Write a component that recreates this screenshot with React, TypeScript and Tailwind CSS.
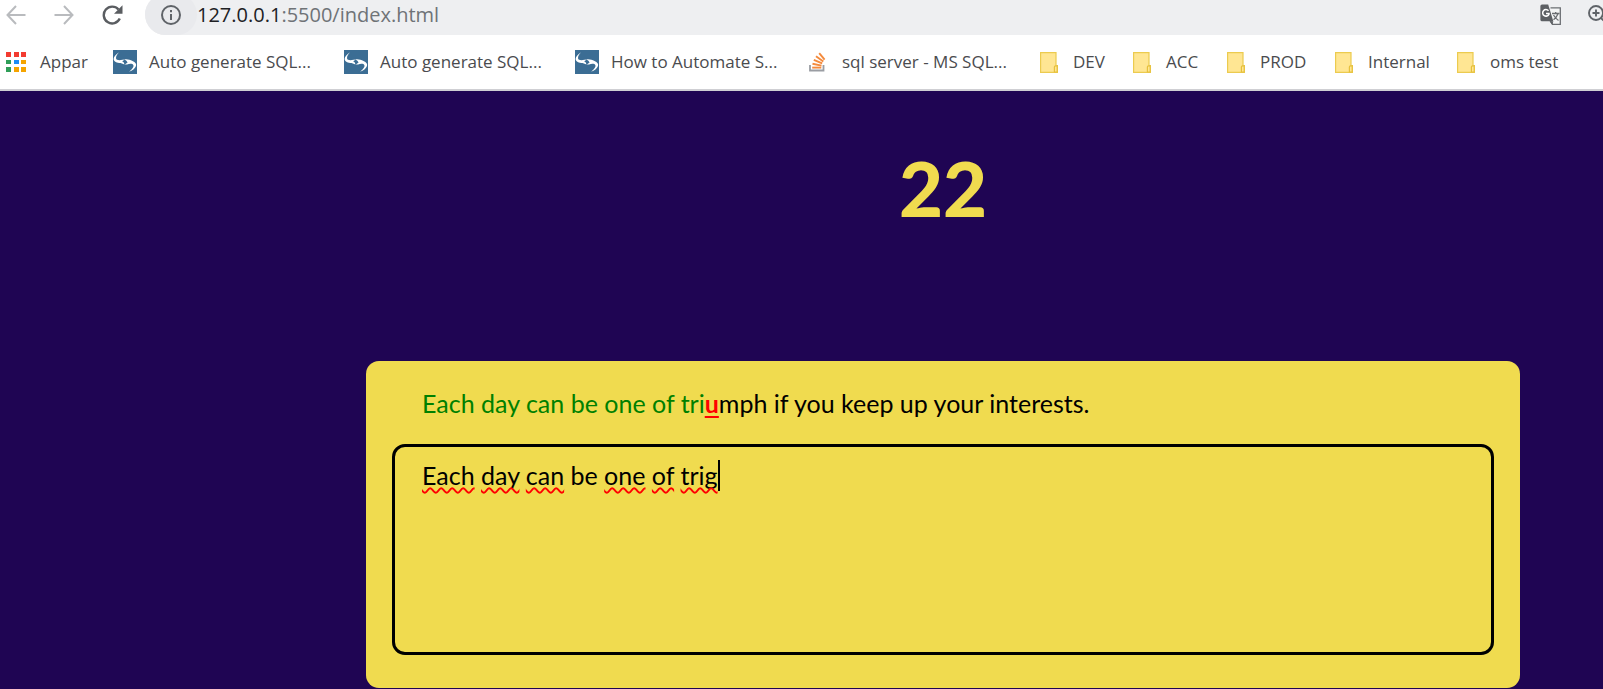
import { useState, type ReactNode } from "react";

function AppsIcon() {
  const colors = [
    "#f33b30", "#f33b30", "#f33b30",
    "#2f9e58", "#1b8cf5", "#f5a400",
    "#2f9e58", "#f5a400", "#f5a400",
  ];
  return (
    <svg viewBox="0 0 20 20" className="h-5 w-5" shapeRendering="crispEdges" aria-hidden="true">
      {colors.map((fill, i) => (
        <rect key={i} x={(i % 3) * 7.5} y={Math.floor(i / 3) * 7.5} width="5" height="4.6" fill={fill} />
      ))}
    </svg>
  );
}

function ShackIcon() {
  return (
    <svg viewBox="0 0 24 24" className="h-6 w-6" aria-hidden="true">
      <rect width="24" height="24" fill="#3b6d94" />
      <path d="M6.200 2.200 C3.200 4 .6 6.600 .6 9 C.8 11.700 4 13 7.500 13 L11.500 14.400 L10.800 12.600 L9.200 11.300 L12 9.600 L9.500 9.800 C6 10.600 3.400 10.200 3 8.200 C2.900 6 4.500 3.900 6.200 2.200 Z" fill="#fff" />
      <path d="M11.500 9.400 C14 8.800 17 9.600 19.500 11 C22.400 12.400 23.700 13.800 23 16 C22 18.600 19.500 20.700 16 21.800 C18.800 19.500 21 17 20.400 15.200 C19.600 13.600 17 13.300 14 14.600 L11.800 14.400 L14.600 12.400 L13.400 10.800 Z" fill="#fff" />
    </svg>
  );
}

function StackIcon() {
  return (
    <svg viewBox="0 0 18 20" className="h-5 w-[18px]" fill="none" aria-hidden="true">
      <path d="M1 13 V18.500 H14.500 V13" stroke="#9a9da3" strokeWidth="1.800" />
      <g stroke="#f48a3c" strokeWidth="1.900">
        <path d="M3.200 15.600 H12.300" />
        <path d="M3.500 11.800 L12.500 13.600" />
        <path d="M4.800 7.800 L13.200 11.400" />
        <path d="M7 4.200 L14.300 9.400" />
        <path d="M10.200 1.200 L15.600 7.600" />
      </g>
    </svg>
  );
}

function FolderIcon() {
  return (
    <svg viewBox="0 0 18 21" className="h-[21px] w-[18px]" aria-hidden="true">
      <path d="M.6 .6 H16 V13.500 H17.400 V20.400 H.6 Z" fill="#ffe693" stroke="#eccb4f" strokeWidth="1.200" />
      <path d="M14.400 20 V15 Q14.400 13.800 15.600 13.800 H17.200 V20 Z" fill="#ffe693" stroke="#e6c03c" strokeWidth="1.200" />
    </svg>
  );
}

function ArrowIcon({ flip = false }: { flip?: boolean }) {
  return (
    <svg viewBox="0 0 20 20" className={flip ? "h-5 w-5 -scale-x-100" : "h-5 w-5"} fill="none" stroke="#b9bbbe" strokeWidth="2" aria-hidden="true">
      <path d="M19.500 10 H2 M10 1 L1.500 10 L10 19" />
    </svg>
  );
}

function ReloadIcon() {
  return (
    <svg viewBox="0 0 22 20" className="h-5 w-[22px]" aria-hidden="true">
      <path d="M17.800 13.600 A8.400 8.400 0 1 1 16.500 4.500" fill="none" stroke="#5a5d61" strokeWidth="2.400" />
      <path d="M20.500 .3 V8.800 H12 Z" fill="#5a5d61" />
    </svg>
  );
}

function InfoIcon() {
  return (
    <svg viewBox="0 0 20 20" className="h-5 w-5" fill="none" stroke="#5f6368" strokeWidth="2" aria-hidden="true">
      <circle cx="10" cy="10" r="9" />
      <path d="M10 9 V15 M10 5 V7.200" />
    </svg>
  );
}

function TranslateIcon() {
  return (
    <svg viewBox="0 0 22 22" className="h-[22px] w-[22px]" aria-hidden="true">
      <path d="M10.500 3.800 H20.300 V20.300 H12.500 L10.500 17" fill="#f3f4f5" stroke="#6b6e72" strokeWidth="1.300" />
      <path d="M2 .5 H8.200 L13.300 17.300 H2 Q.4 17.300 .4 15.700 V2.100 Q.4 .5 2 .5 Z" fill="#5d6064" />
      <path d="M9.500 17.300 H13.300 L12.300 21 Z" fill="#5d6064" />
      <path d="M8.500 6.700 A3.300 3.300 0 1 0 9 10.100 V9.500 H6" fill="none" stroke="#fff" strokeWidth="1.500" />
      <path d="M12 9.500 H19.500 M15.700 8 V9.500 M18 9.700 Q16.500 13.500 13.500 15.800 M13.500 11 Q15.500 14.500 18.500 16.500" fill="none" stroke="#6b6e72" strokeWidth="1.300" />
    </svg>
  );
}

function ZoomIcon() {
  return (
    <svg viewBox="0 0 20 20" className="h-5 w-5" fill="none" stroke="#5f6368" strokeWidth="1.900" aria-hidden="true">
      <circle cx="8" cy="8" r="7" />
      <path d="M4.500 8 H11.500 M8 4.500 V11.500 M13 13 L19 19" />
    </svg>
  );
}

type Bookmark = { label: string; icon: ReactNode; width: string };

const bookmarks: Bookmark[] = [
  { label: "Appar", icon: <AppsIcon />, width: "w-[109px]" },
  { label: "Auto generate SQL...", icon: <ShackIcon />, width: "w-[231px]" },
  { label: "Auto generate SQL...", icon: <ShackIcon />, width: "w-[231px]" },
  { label: "How to Automate S...", icon: <ShackIcon />, width: "w-[231px]" },
  { label: "sql server - MS SQL...", icon: <StackIcon />, width: "w-[231px]" },
  { label: "DEV", icon: <FolderIcon />, width: "w-[93px]" },
  { label: "ACC", icon: <FolderIcon />, width: "w-[94px]" },
  { label: "PROD", icon: <FolderIcon />, width: "w-[108px]" },
  { label: "Internal", icon: <FolderIcon />, width: "w-[122px]" },
  { label: "oms test", icon: <FolderIcon />, width: "w-[110px]" },
];

function Toolbar() {
  return (
    <div className="flex h-[35px] items-end overflow-hidden">
      <div className="flex h-[41px] w-[145px] shrink-0 items-center gap-7 pl-[6px]">
        <button type="button" aria-label="Back"><ArrowIcon /></button>
        <button type="button" aria-label="Forward"><ArrowIcon flip /></button>
        <button type="button" aria-label="Reload"><ReloadIcon /></button>
      </div>
      <div className="flex h-[41px] min-w-0 flex-1 items-center rounded-l-full bg-[#eeeff1]">
        <button type="button" aria-label="Site information" className="flex h-[41px] w-[52px] shrink-0 items-center justify-center rounded-full bg-[#e9eaed]">
          <InfoIcon />
        </button>
        <div className="min-w-0 flex-1 text-xl leading-7 whitespace-nowrap text-[#6f7377]">
          <span className="text-[#202124]">127.0.0.1</span>:5500/index.html
        </div>
        <button type="button" aria-label="Translate this page" className="mr-[26px] shrink-0"><TranslateIcon /></button>
        <button type="button" aria-label="Zoom" className="-mr-[5px] shrink-0"><ZoomIcon /></button>
      </div>
    </div>
  );
}

function BookmarksBar() {
  return (
    <nav aria-label="Bookmarks" className="flex h-[56px] items-center overflow-hidden border-b-2 border-[#cfcfd3] pl-1 text-[17px] leading-6 text-[#4a4b4e]">
      {bookmarks.map(({ label, icon, width }, i) => (
        <a key={i} href="#" className={`flex shrink-0 items-center gap-3 whitespace-nowrap ${width}`}>
          <span className="flex w-6 justify-center">{icon}</span>
          {label}
        </a>
      ))}
    </nav>
  );
}

const quote = "Each day can be one of triumph if you keep up your interests.";

function QuoteDisplay({ typed }: { typed: string }) {
  return (
    <p id="quote" className="mb-[25px] ml-[30px]">
      {quote.split("").map((char, i) => {
        if (i >= typed.length) return <span key={i}>{char}</span>;
        return (
          <span key={i} className={typed[i] === char ? "text-[#008000]" : "font-bold text-[#ff0000] underline decoration-2 underline-offset-3"}>
            {char}
          </span>
        );
      })}
    </p>
  );
}

export default function App() {
  const [typed, setTyped] = useState("Each day can be one of trig");
  return (
    <div className="flex min-h-screen flex-col bg-[#1f0553]">
      <header className="bg-white font-['Open_Sans',sans-serif]">
        <Toolbar />
        <BookmarksBar />
      </header>
      <main className="flex flex-1 flex-col pr-[83px] pl-[366px] font-['Lato',sans-serif] text-black">
        <div className="mt-[51px] mb-[127px] text-center text-[76px] leading-[92px] font-black text-[#f0db4f]">22</div>
        <section className="rounded-[13px] bg-[#f0db4f] px-[26px] pt-[27px] pb-[33px] text-[25px] leading-[31px]">
          <QuoteDisplay typed={typed} />
          <div className="relative">
            <textarea
              aria-labelledby="quote"
              spellCheck={false}
              value={typed}
              onChange={(e) => setTyped(e.target.value)}
              className="block h-[211px] w-full resize-none rounded-[13px] border-3 border-black bg-transparent px-[27px] py-[13px] outline-none"
            />
            <div aria-hidden="true" className="pointer-events-none absolute inset-0 border-3 border-transparent px-[27px] py-[13px] break-words whitespace-pre-wrap text-transparent">
              {typed.split(" ").map((word, i) => (
                <span key={i}>
                  {i > 0 && " "}
                  <span className={word === "be" ? "" : "underline decoration-[#ff0000] decoration-wavy decoration-2 underline-offset-2 [text-decoration-skip-ink:none]"}>{word}</span>
                </span>
              ))}
              <span className="-mr-0.5 inline-block h-[31px] w-0.5 bg-black align-bottom" />
            </div>
          </div>
        </section>
      </main>
    </div>
  );
}
